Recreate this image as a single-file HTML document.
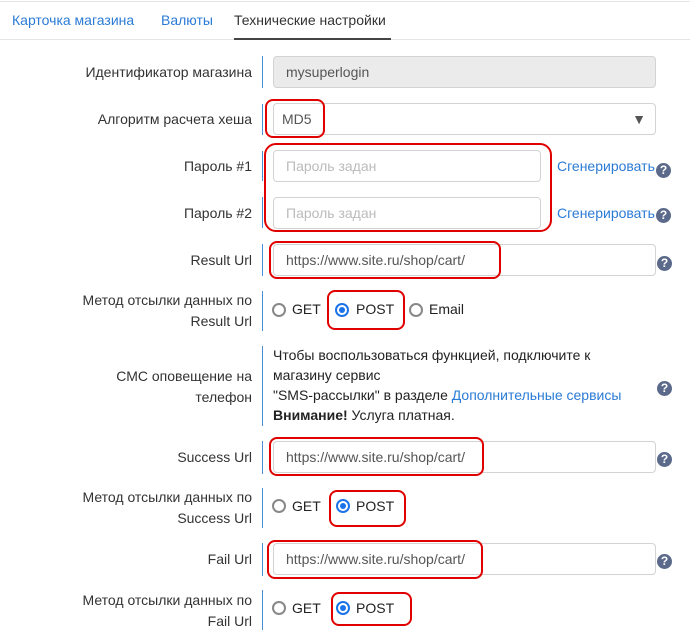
<!DOCTYPE html>
<html><head><meta charset="utf-8"><style>
body{margin:0;width:690px;height:644px;background:#fff;font-family:"Liberation Sans",sans-serif;font-size:14px;color:#222;position:relative;overflow:hidden}
.a{position:absolute}
.lbl{position:absolute;right:438px;text-align:right;color:#333;line-height:21px}
.bar{position:absolute;left:262px;width:1px;background:#4a8fd6}
.inp{position:absolute;left:273px;border:1px solid #d3d3d3;border-radius:4px;box-sizing:border-box;color:#555;padding-left:12px;background:#fff}
.red{position:absolute;border:2px solid #e00000;border-radius:8px;box-sizing:border-box}
.help{position:absolute;width:15px;height:15px;border-radius:50%;background:#5b6a8a;color:#fff;font-size:12px;font-weight:bold;text-align:center;line-height:15px}
.r{position:absolute;width:14px;height:14px;border-radius:50%;border:2px solid #888;box-sizing:border-box;background:#fff}
.r.on{border-color:#1a73e8}
.r.on::after{content:"";position:absolute;left:2px;top:2px;width:6px;height:6px;border-radius:50%;background:#1a73e8}
.t{position:absolute;line-height:16px}
.link{color:#2b7bd6}
</style></head><body>
<div class="a" style="left:0;top:1px;width:690px;height:1px;background:#e5e5e5"></div>
<div class="a" style="left:0;top:39px;width:690px;height:1px;background:#e5e5e5"></div>
<div class="t link" style="left:12px;top:12px">Карточка магазина</div>
<div class="t link" style="left:161px;top:12px">Валюты</div>
<div class="t" style="left:234px;top:12px;color:#333">Технические настройки</div>
<div class="a" style="left:234px;top:38px;width:157px;height:2px;background:#444"></div>

<div class="lbl" style="top:62px">Идентификатор магазина</div>
<div class="bar" style="top:56px;height:32px"></div>
<div class="inp" style="top:56px;width:383px;height:32px;line-height:30px;background:#ebebeb">mysuperlogin</div>

<div class="lbl" style="top:109px">Алгоритм расчета хеша</div>
<div class="bar" style="top:104px;height:31px"></div>
<div class="inp" style="top:103px;width:383px;height:32px;line-height:30px;padding-left:8px">MD5<span style="position:absolute;right:9px;top:0;font-size:14px;color:#555">▼</span></div>
<div class="red" style="left:265px;top:99px;width:60px;height:39px"></div>

<div class="lbl" style="top:156px">Пароль #1</div>
<div class="bar" style="top:151px;height:30px"></div>
<div class="inp" style="top:150px;width:268px;height:32px;line-height:30px;color:#bbb">Пароль задан</div>
<div class="t link" style="left:557px;top:158px">Сгенерировать</div>
<div class="help" style="left:656px;top:163px">?</div>
<div class="lbl" style="top:203px">Пароль #2</div>
<div class="bar" style="top:197px;height:31px"></div>
<div class="inp" style="top:197px;width:268px;height:32px;line-height:30px;color:#bbb">Пароль задан</div>
<div class="t link" style="left:557px;top:205px">Сгенерировать</div>
<div class="help" style="left:656px;top:208px">?</div>
<div class="red" style="left:264px;top:143px;width:288px;height:89px;border-radius:12px"></div>

<div class="lbl" style="top:250px">Result Url</div>
<div class="bar" style="top:244px;height:32px"></div>
<div class="inp" style="top:244px;width:383px;height:32px;line-height:30px">https://www.site.ru/shop/cart/</div>
<div class="red" style="left:269px;top:241px;width:232px;height:38px"></div>
<div class="help" style="left:657px;top:256px">?</div>

<div class="lbl" style="top:290px">Метод отсылки данных по<br>Result Url</div>
<div class="bar" style="top:291px;height:40px"></div>
<div class="r" style="left:272px;top:303px"></div><div class="t" style="left:292px;top:301px">GET</div>
<div class="r on" style="left:335px;top:303px"></div><div class="t" style="left:356px;top:301px">POST</div>
<div class="r" style="left:409px;top:303px"></div><div class="t" style="left:429px;top:301px">Email</div>
<div class="red" style="left:327px;top:290px;width:78px;height:40px"></div>

<div class="lbl" style="top:366px">СМС оповещение на<br>телефон</div>
<div class="bar" style="top:346px;height:80px"></div>
<div class="a" style="left:273px;top:345px;line-height:20px;color:#222">Чтобы воспользоваться функцией, подключите к<br>магазину сервис<br>"SMS-рассылки" в разделе <span class="link">Дополнительные сервисы</span><br><b>Внимание!</b> Услуга платная.</div>
<div class="help" style="left:657px;top:381px">?</div>

<div class="lbl" style="top:447px">Success Url</div>
<div class="bar" style="top:441px;height:33px"></div>
<div class="inp" style="top:441px;width:383px;height:32px;line-height:30px">https://www.site.ru/shop/cart/</div>
<div class="red" style="left:269px;top:437px;width:215px;height:39px"></div>
<div class="help" style="left:657px;top:452px">?</div>

<div class="lbl" style="top:487px">Метод отсылки данных по<br>Success Url</div>
<div class="bar" style="top:488px;height:40px"></div>
<div class="r" style="left:272px;top:499px"></div><div class="t" style="left:292px;top:498px">GET</div>
<div class="r on" style="left:336px;top:499px"></div><div class="t" style="left:356px;top:498px">POST</div>
<div class="red" style="left:329px;top:490px;width:77px;height:37px"></div>

<div class="lbl" style="top:549px">Fail Url</div>
<div class="bar" style="top:543px;height:33px"></div>
<div class="inp" style="top:543px;width:383px;height:32px;line-height:30px">https://www.site.ru/shop/cart/</div>
<div class="red" style="left:267px;top:540px;width:216px;height:39px"></div>
<div class="help" style="left:657px;top:554px">?</div>

<div class="lbl" style="top:590px">Метод отсылки данных по<br>Fail Url</div>
<div class="bar" style="top:590px;height:40px"></div>
<div class="r" style="left:272px;top:601px"></div><div class="t" style="left:292px;top:600px">GET</div>
<div class="r on" style="left:336px;top:601px"></div><div class="t" style="left:356px;top:600px">POST</div>
<div class="red" style="left:331px;top:592px;width:81px;height:34px"></div>
</body></html>
